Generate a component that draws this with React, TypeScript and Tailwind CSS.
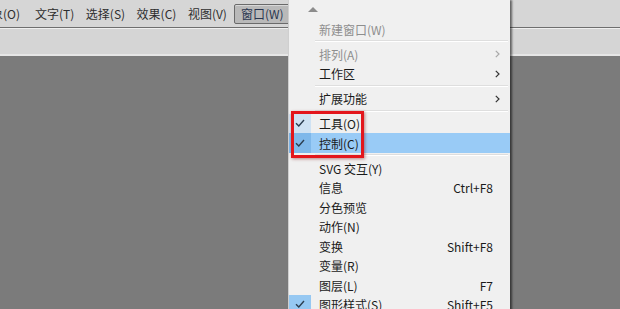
import React from 'react';

type Item =
  | { kind: 'sep' }
  | {
      kind: 'item';
      label: string;
      shortcut?: string;
      sub?: boolean;
      disabled?: boolean;
      check?: 'soft' | 'hot' | 'blue';
      active?: boolean;
    };

const items: Item[] = [
  { kind: 'item', label: '新建窗口(W)', disabled: true },
  { kind: 'sep' },
  { kind: 'item', label: '排列(A)', disabled: true, sub: true },
  { kind: 'item', label: '工作区', sub: true },
  { kind: 'sep' },
  { kind: 'item', label: '扩展功能', sub: true },
  { kind: 'sep' },
  { kind: 'item', label: '工具(O)', check: 'soft' },
  { kind: 'item', label: '控制(C)', check: 'hot', active: true },
  { kind: 'sep' },
  { kind: 'item', label: 'SVG 交互(Y)' },
  { kind: 'item', label: '信息', shortcut: 'Ctrl+F8' },
  { kind: 'item', label: '分色预览' },
  { kind: 'item', label: '动作(N)' },
  { kind: 'item', label: '变换', shortcut: 'Shift+F8' },
  { kind: 'item', label: '变量(R)' },
  { kind: 'item', label: '图层(L)', shortcut: 'F7' },
  { kind: 'item', label: '图形样式(S)', shortcut: 'Shift+F5', check: 'blue' },
];

const Check = () => (
  <svg width="10" height="8" viewBox="0 0 10 8" fill="none">
    <path d="M1 4.2 L3.8 7 L9 1" stroke="#2c3e50" strokeWidth="1.4" />
  </svg>
);

const Chevron = ({ dim }: { dim?: boolean }) => (
  <svg width="5" height="8" viewBox="0 0 5 8" fill="none">
    <path d="M0.8 0.8 L4 4 L0.8 7.2" stroke={dim ? '#a8a8a8' : '#333'} strokeWidth="1.2" />
  </svg>
);

const checkBg = {
  soft: 'bg-[#cfe2f3]',
  hot: 'bg-[#7fb8ea]',
  blue: 'bg-[#96c8f2]',
};

const menubar = ['文字(T)', '选择(S)', '效果(C)', '视图(V)'];

export default function App() {
  return (
    <div className="relative w-[620px] h-[309px] overflow-hidden bg-[#7b7b7b] font-['Noto_Sans_CJK_SC',sans-serif]">
      <div className="h-[28px] bg-[#d6d6d6] border-b border-[#6f6f6f] flex items-center text-[12px] text-[#2e2e2e]">
        <span className="ml-[-21px]">对象(O)</span>
        <div className="flex gap-[11.5px] ml-[15px]">
          {menubar.map((m) => (
            <span key={m}>{m}</span>
          ))}
        </div>
        <span className="ml-[7px] h-[20px] px-[6px] flex items-center bg-[#b9b9b9] border border-[#6a6a6a] rounded-[2px] shadow-[inset_0_1px_0_#d8d8d8] text-[#2a3650]">
          窗口(W)
        </span>
      </div>
      <div className="h-[28px] bg-[#d5d5d5] border-t border-[#efefef] border-b-2 border-b-[#e6e6e6]" />

      <div className="absolute left-[288px] top-0 w-[222px] h-[316px] bg-[#f0f0f0] border-l border-[#cfcfcf] shadow-[2px_0_2px_rgba(0,0,0,0.55)] text-[12px] text-[#1a1a1a]">
        <div className="h-[19px] flex items-center pl-[19px]">
          <svg width="10" height="5" viewBox="0 0 10 5">
            <path d="M0 5 L5 0 L10 5 Z" fill="#8c8c8c" />
          </svg>
        </div>
        {items.map((it, i) =>
          it.kind === 'sep' ? (
            <div key={i} className="h-[5.5px] flex items-center pl-[26px] pr-[2px]">
              <div className="h-[2px] w-full bg-[#dedede] border-b border-white" />
            </div>
          ) : (
            <div
              key={i}
              className={`h-[19.5px] flex items-center ${it.active ? 'bg-[#99cbf6]' : ''}`}
            >
              <div
                className={`w-[22px] h-full flex items-center justify-center ${it.check ? checkBg[it.check] : ''}`}
              >
                {it.check && <Check />}
              </div>
              <span className={`ml-[8px] pt-[2px] flex-1 ${it.disabled ? 'text-[#8e8e8e]' : ''}`}>{it.label}</span>
              {it.shortcut && <span className="mr-[17px] pt-[2px]">{it.shortcut}</span>}
              {it.sub && (
                <span className="mr-[10px] pt-[1px] flex items-center">
                  <Chevron dim={it.disabled} />
                </span>
              )}
            </div>
          )
        )}
      </div>

      <div className="absolute left-[291px] top-[111px] w-[73px] h-[47px] border-[3px] border-[#e3161c] shadow-[1px_1px_3px_rgba(120,0,0,0.45)]" />
    </div>
  );
}
